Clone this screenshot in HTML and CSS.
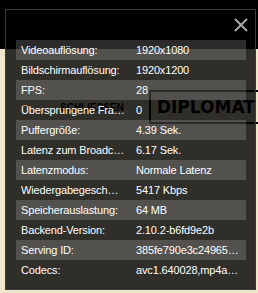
FILE: index.html
```html
<!DOCTYPE html>
<html lang="de">
<head>
  <meta charset="UTF-8">
  <meta name="viewport" content="width=device-width, initial-scale=1.0">
  <title>Videostatistiken</title>
  <link rel="stylesheet" href="styles.css">
</head>
<body>
  <div class="video"></div>

  <div class="page">
    <div class="promo">
      <span class="promo-close">SCHLIESSEN</span>
      <div class="brand-box">DIPLOMAT</div>
    </div>
  </div>

  <div class="stats-modal">
    <div class="stats-head">
      <button class="close-btn" type="button" aria-label="Schließen">
        <svg width="14" height="14" viewBox="0 0 14 14">
          <path d="M1 1 L13 13 M13 1 L1 13" stroke="#a8a8a8" stroke-width="2" fill="none"/>
        </svg>
      </button>
    </div>

    <div class="stats-table">
      <div class="stat-row"><span class="stat-label">Videoauflösung:</span><span class="stat-value">1920x1080</span></div>
      <div class="stat-row"><span class="stat-label">Bildschirmauflösung:</span><span class="stat-value">1920x1200</span></div>
      <div class="stat-row"><span class="stat-label">FPS:</span><span class="stat-value">28</span></div>
      <div class="stat-row"><span class="stat-label">Übersprungene Frames:</span><span class="stat-value">0</span></div>
      <div class="stat-row"><span class="stat-label">Puffergröße:</span><span class="stat-value">4.39 Sek.</span></div>
      <div class="stat-row"><span class="stat-label">Latenz zum Broadcaster:</span><span class="stat-value">6.17 Sek.</span></div>
      <div class="stat-row"><span class="stat-label">Latenzmodus:</span><span class="stat-value">Normale Latenz</span></div>
      <div class="stat-row"><span class="stat-label">Wiedergabegeschwindigkeit:</span><span class="stat-value">5417 Kbps</span></div>
      <div class="stat-row"><span class="stat-label">Speicherauslastung:</span><span class="stat-value">64 MB</span></div>
      <div class="stat-row"><span class="stat-label">Backend-Version:</span><span class="stat-value">2.10.2-b6fd9e2b</span></div>
      <div class="stat-row"><span class="stat-label">Serving ID:</span><span class="stat-value">385fe790e3c249658a1d2c0b7e4f6a91</span></div>
      <div class="stat-row"><span class="stat-label">Codecs:</span><span class="stat-value">avc1.640028,mp4a.40.2</span></div>
    </div>
  </div>
</body>
</html>
```

FILE: styles.css
```css
html, body {
  margin: 0;
  padding: 0;
}
body {
  position: relative;
  width: 258px;
  height: 293px;
  overflow: hidden;
  background: #f0e6cc;
  font-family: "Liberation Sans", Arial, sans-serif;
}
.video {
  height: 49px;
  background: #000;
}
.page {
  overflow: hidden;
}
.promo {
  display: flex;
  align-items: center;
  margin-top: 41px;
}
.promo-close {
  margin-left: 60px;
  font-size: 10px;
  font-weight: bold;
  color: #000;
  white-space: nowrap;
}
.brand-box {
  flex-shrink: 0;
  margin-left: 25px;
  width: 130px;
  height: 30px;
  padding-left: 6px;
  border: 2px solid #000;
  font-family: "DejaVu Sans", sans-serif;
  font-size: 17px;
  font-weight: bold;
  line-height: 30px;
  color: #000;
  white-space: nowrap;
}
.stats-modal {
  position: absolute;
  left: 5px;
  top: 9px;
  box-sizing: border-box;
  width: 251px;
  height: 281px;
  padding: 0 9px 9px 10px;
  background: rgba(0, 0, 0, 0.8);
  border: 1px solid #3a3a3a;
}
.stats-head {
  display: flex;
  justify-content: flex-end;
  align-items: center;
  height: 30px;
}
.close-btn {
  display: flex;
  margin: 0 -2px 0 0;
  padding: 0;
  border: none;
  background: none;
  cursor: pointer;
}
.stats-table {
  width: 230px;
}
.stat-row {
  display: grid;
  grid-template-columns: 115px 115px;
  height: 20px;
  line-height: 20px;
  font-size: 11px;
  letter-spacing: -0.15px;
  color: #fff;
}
.stat-row:nth-child(odd) {
  background: rgba(255, 255, 255, 0.17);
}
.stat-label, .stat-value {
  padding: 0 5px;
  overflow: hidden;
  white-space: nowrap;
  text-overflow: ellipsis;
}
```
